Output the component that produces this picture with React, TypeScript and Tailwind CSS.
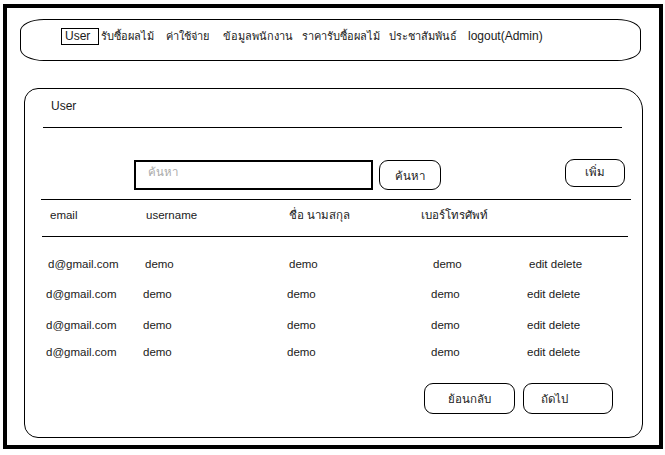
import React from "react";

const navItems = [
  { label: "รับซื้อผลไม้", w: "w-[65px]" },
  { label: "ค่าใช้จ่าย", w: "w-[57px]" },
  { label: "ข้อมูลพนักงาน", w: "w-[79px]" },
  { label: "ราคารับซื้อผลไม้", w: "w-[87px]" },
  { label: "ประชาสัมพันธ์", w: "w-[79px]" },
];

const rows = [
  { pl: "pl-[23px]", mt: "mt-[19px]" },
  { pl: "pl-[21px]", mt: "mt-[14px]" },
  { pl: "pl-[21px]", mt: "mt-[15px]" },
  { pl: "pl-[21px]", mt: "mt-[11px]" },
];

export default function App() {
  return (
    <div className="w-[665px] h-[455px] bg-white pt-[4px] pl-[3px] font-['Liberation_Sans','Tahoma',sans-serif] text-[12px] leading-[16px] text-[#1a1a1a]">
      <div className="w-[660px] h-[445px] border-4 border-black flex flex-col">
        {/* Nav */}
        <div className="mt-[11px] ml-[13px] w-[621px] h-[42px] border border-black rounded-[24px/12px] flex items-center pl-[40px] pb-[8px]">
          <div className="border border-black h-[17px] px-[3px] flex items-center mr-[2px] w-[38px]">User</div>
          {navItems.map((n) => (
            <div key={n.label} className={`${n.w} whitespace-nowrap text-[11px]`}>
              {n.label}
            </div>
          ))}
          <div className="whitespace-nowrap">logout(Admin)</div>
        </div>

        {/* Panel */}
        <div className="mt-[27px] ml-[17px] w-[619px] h-[350px] border border-black rounded-[14px] rounded-tr-[22px] flex flex-col">
          <div className="mt-[9px] pl-[26px]">User</div>
          <div className="mt-[13px] ml-[18px] w-[579px] border-t border-black" />

          <div className="mt-[31px] flex items-start h-[31px] text-[11.5px]">
            <div className="ml-[109px] mt-[1px] w-[239px] h-[30px] border-2 border-black pl-[12px] pt-[2px] text-[#aaaaaa]">
              ค้นหา
            </div>
            <div className="ml-[6px] mt-[1px] w-[62px] h-[30px] border border-black rounded-[9px] flex items-center justify-center pt-[2px]">
              ค้นหา
            </div>
            <div className="ml-[124px] w-[60px] h-[28px] border border-black rounded-[9px] flex items-center justify-center pb-[3px]">
              เพิ่ม
            </div>
          </div>

          <div className="mt-[9px] ml-[16px] w-[590px] border-t border-black" />

          <div className="mt-[7px] pl-[25px] flex text-[11.5px]">
            <div className="w-[96px]">email</div>
            <div className="w-[143px]">username</div>
            <div className="w-[132px]">ชื่อ นามสกุล</div>
            <div className="w-[108px]">เบอร์โทรศัพท์</div>
          </div>

          <div className="mt-[13px] ml-[17px] w-[586px] border-t border-black" />

          {rows.map((r, i) => (
            <div key={i} className={`${r.mt} ${r.pl} flex text-[11.5px]`}>
              <div className="w-[97px]">d@gmail.com</div>
              <div className="w-[144px]">demo</div>
              <div className="w-[144px]">demo</div>
              <div className="w-[96px]">demo</div>
              <div>edit delete</div>
            </div>
          ))}

          <div className="mt-[23px] flex justify-end pr-[29px] gap-[8px] text-[11.5px]">
            <div className="w-[91px] h-[31px] border border-black rounded-[9px] flex items-center justify-center">
              ย้อนกลับ
            </div>
            <div className="w-[90px] h-[31px] border border-black rounded-[9px] flex items-center pl-[17px]">
              ถัดไป
            </div>
          </div>
        </div>
      </div>
    </div>
  );
}
